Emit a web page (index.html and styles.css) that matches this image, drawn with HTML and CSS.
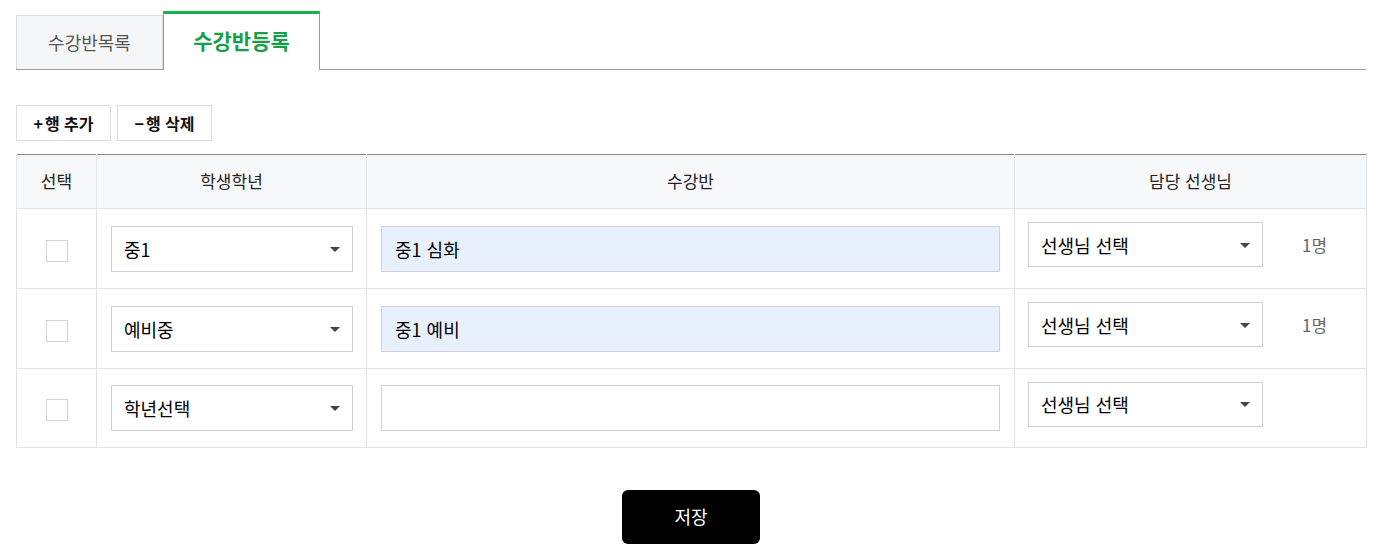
FILE: index.html
```html
<!DOCTYPE html>
<html lang="ko">
<head>
<meta charset="utf-8">
<title>수강반등록</title>
<link rel="stylesheet" href="styles.css">
</head>
<body>
<div class="page">
  <div class="tabs">
    <div class="tab">수강반목록</div>
    <div class="tab active">수강반등록</div>
  </div>

  <div class="toolbar">
    <button class="tool-btn"><span class="sign">+</span>행 추가</button>
    <button class="tool-btn"><span class="sign">−</span>행 삭제</button>
  </div>

  <table class="grid">
    <colgroup>
      <col class="c1"><col class="c2"><col class="c3"><col class="c4">
    </colgroup>
    <thead>
      <tr><th>선택</th><th>학생학년</th><th>수강반</th><th>담당 선생님</th></tr>
    </thead>
    <tbody>
      <tr>
        <td class="center"><span class="check"></span></td>
        <td class="gcell"><div class="select grade"><span>중1</span></div></td>
        <td class="icell"><div class="text-input filled">중1 심화</div></td>
        <td class="tcell"><div class="teacher"><div class="select tsel"><span>선생님 선택</span></div><span class="count">1명</span></div></td>
      </tr>
      <tr>
        <td class="center"><span class="check"></span></td>
        <td class="gcell"><div class="select grade"><span>예비중</span></div></td>
        <td class="icell"><div class="text-input filled">중1 예비</div></td>
        <td class="tcell"><div class="teacher"><div class="select tsel"><span>선생님 선택</span></div><span class="count">1명</span></div></td>
      </tr>
      <tr class="last">
        <td class="center"><span class="check"></span></td>
        <td class="gcell"><div class="select grade"><span>학년선택</span></div></td>
        <td class="icell"><div class="text-input"></div></td>
        <td class="tcell"><div class="teacher"><div class="select tsel"><span>선생님 선택</span></div></div></td>
      </tr>
    </tbody>
  </table>

  <div class="actions">
    <button class="save">저장</button>
  </div>
</div>
</body>
</html>
```

FILE: styles.css
```css
* { box-sizing: border-box; }
html, body { margin: 0; padding: 0; background: #fff; }
body {
  font-family: "Noto Sans CJK KR", "Noto Sans", sans-serif;
  color: #111;
}
.page {
  width: 1384px;
  padding: 11px 18px 0 16px;
}
.tabs {
  display: flex;
  align-items: flex-end;
  border-bottom: 1px solid #9a9a9a;
  height: 59px;
}
.tab {
  width: 147px;
  height: 54px;
  background: #f5f6f8;
  border: 1px solid #dcdcdc;
  border-bottom: none;
  display: flex;
  align-items: center;
  justify-content: center;
  font-size: 18px;
  color: #555;
  padding-bottom: 2px;
}
.tab.active {
  width: 157px;
  height: 59px;
  margin-bottom: -1px;
  background: #fff;
  border-top: 3px solid #17b14c;
  border-left: 1px solid #9a9a9a;
  border-right: 1px solid #9a9a9a;
  color: #17a045;
  font-weight: 700;
  font-size: 21px;
  padding-bottom: 4px;
}
.toolbar {
  display: flex;
  gap: 6px;
  margin-top: 35px;
}
.tool-btn {
  width: 95px;
  height: 36px;
  border: 1px solid #dcdcdc;
  background: #fff;
  font-family: inherit;
  font-size: 16px;
  font-weight: 700;
  color: #111;
  padding: 0;
  display: flex;
  align-items: center;
  justify-content: center;
}
.tool-btn .sign { margin-right: 2px; font-weight: 700; }
.grid {
  margin-top: 13px;
  width: 1350px;
  border-collapse: collapse;
  table-layout: fixed;
  border-top: 1px solid #8a8a8a;
}
.c1 { width: 80px; }
.c2 { width: 270px; }
.c3 { width: 648px; }
.c4 { width: 352px; }
.grid th {
  height: 54px;
  background: #f7f8fa;
  border: 1px solid #e1e3e6;
  border-top: none;
  font-weight: 400;
  font-size: 17px;
  color: #222;
  padding: 0 0 2px;
}
.grid td {
  height: 80px;
  border: 1px solid #e1e3e6;
  padding: 0 14px 0 14px;
  vertical-align: middle;
}
.grid tr.last td { height: 79px; }
.grid td.center { text-align: center; padding: 0; }
.grid td.tcell { padding-left: 13px; }
.check {
  display: inline-block;
  width: 22px;
  height: 22px;
  border: 1px solid #d3d3d3;
  background: #fff;
  vertical-align: middle;
  margin-top: 2px;
}
.select {
  position: relative;
  height: 46px;
  border: 1px solid #cfcfcf;
  background: #fff;
  display: flex;
  align-items: center;
  padding-left: 12px;
  font-size: 18px;
  color: #000;
}
.select::after {
  content: "";
  position: absolute;
  right: 12px;
  top: 50%;
  margin-top: -2px;
  border-left: 5px solid transparent;
  border-right: 5px solid transparent;
  border-top: 5px solid #444;
}
.grade { width: 242px; }
.text-input {
  width: 619px;
  height: 46px;
  border: 1px solid #cfd3d8;
  background: #fff;
  display: flex;
  align-items: center;
  padding-left: 13px;
  font-size: 18px;
  color: #000;
}
.text-input.filled { background: #e8f0fe; }
.teacher {
  display: flex;
  align-items: center;
  margin-bottom: 8px;
}
.tsel { width: 235px; height: 45px; }
.count {
  margin-left: 39px;
  font-size: 17px;
  color: #666;
}
.actions {
  display: flex;
  justify-content: center;
  margin-top: 42px;
}
.save {
  width: 138px;
  height: 54px;
  background: #000;
  color: #fff;
  border: none;
  border-radius: 6px;
  font-family: inherit;
  font-size: 18px;
  padding: 0 0 2px;
}
```
